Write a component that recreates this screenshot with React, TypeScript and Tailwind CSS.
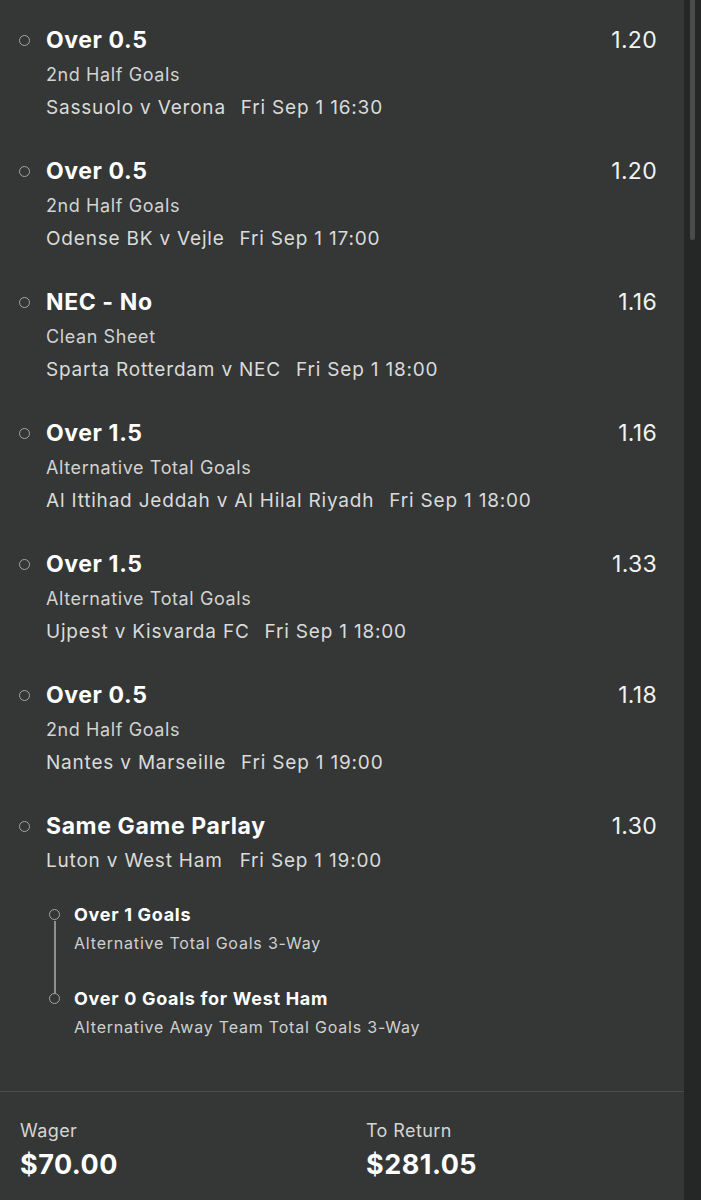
const legs = [
  {
    title: "Over 0.5",
    market: "2nd Half Goals",
    match: "Sassuolo v Verona",
    time: "Fri Sep 1 16:30",
    odds: "1.20",
  },
  {
    title: "Over 0.5",
    market: "2nd Half Goals",
    match: "Odense BK v Vejle",
    time: "Fri Sep 1 17:00",
    odds: "1.20",
  },
  {
    title: "NEC - No",
    market: "Clean Sheet",
    match: "Sparta Rotterdam v NEC",
    time: "Fri Sep 1 18:00",
    odds: "1.16",
  },
  {
    title: "Over 1.5",
    market: "Alternative Total Goals",
    match: "Al Ittihad Jeddah v Al Hilal Riyadh",
    time: "Fri Sep 1 18:00",
    odds: "1.16",
  },
  {
    title: "Over 1.5",
    market: "Alternative Total Goals",
    match: "Ujpest v Kisvarda FC",
    time: "Fri Sep 1 18:00",
    odds: "1.33",
  },
  {
    title: "Over 0.5",
    market: "2nd Half Goals",
    match: "Nantes v Marseille",
    time: "Fri Sep 1 19:00",
    odds: "1.18",
  },
];

const sgpLegs = [
  { title: "Over 1 Goals", market: "Alternative Total Goals 3-Way" },
  { title: "Over 0 Goals for West Ham", market: "Alternative Away Team Total Goals 3-Way" },
];

const Dot = () => (
  <span className="w-[27px] shrink-0 flex items-center h-[30px]">
    <span className="block w-[11px] h-[11px] rounded-full border-[1.5px] border-[#a3a5a4]" />
  </span>
);

const App = () => {
  return (
    <div
      className="flex w-[701px] h-[1200px] bg-[#252726] overflow-hidden"
      style={{ fontFamily: "Inter, 'Noto Sans', sans-serif" }}
    >
      <div className="w-[684px] flex flex-col bg-[#343736]">
        {/* Bet legs */}
        <div className="flex-1 pt-[25px] pl-[19px] pr-[27px]">
          {legs.map((leg, i) => (
            <div key={i} className="flex mb-[32px]">
              <Dot />
              <div className="flex-1">
                <div className="flex justify-between items-center h-[30px]">
                  <span className="text-[23px] font-bold text-white tracking-[0.6px]">{leg.title}</span>
                  <span className="text-[23px] text-[#f2f2f2] tracking-[0.3px]">{leg.odds}</span>
                </div>
                <div className="mt-[3px] text-[18px] text-[#d2d3d2] tracking-[0.6px] leading-[33px]">
                  {leg.market}
                </div>
                <div className="text-[19px] text-[#dadbda] tracking-[0.8px] leading-[33px]">
                  {leg.match}
                  <span className="ml-[15px]">{leg.time}</span>
                </div>
              </div>
            </div>
          ))}

          {/* Same game parlay */}
          <div className="flex">
            <Dot />
            <div className="flex-1">
              <div className="flex justify-between items-center h-[30px]">
                <span className="text-[23px] font-bold text-white tracking-[0.6px]">Same Game Parlay</span>
                <span className="text-[23px] text-[#f2f2f2] tracking-[0.3px]">1.30</span>
              </div>
              <div className="mt-[3px] text-[19px] text-[#dadbda] tracking-[0.8px] leading-[33px]">
                Luton v West Ham
                <span className="ml-[17px]">Fri Sep 1 19:00</span>
              </div>

              <div className="relative mt-[25px] -ml-[46px] pl-[74px]">
                <span className="absolute left-[54px] top-[19px] h-[78px] w-[1.5px] bg-[#8e908f]" />
                {sgpLegs.map((s, i) => (
                  <div key={i} className={`relative ${i > 0 ? "mt-[28px]" : ""}`}>
                    <span className="absolute -left-[25px] top-[7px] w-[11px] h-[11px] rounded-full border-[1.5px] border-[#a3a5a4] bg-[#343736]" />
                    <div className="text-[18px] font-bold text-white tracking-[0.7px] leading-[26px]">{s.title}</div>
                    <div className="text-[16px] text-[#cfd0cf] tracking-[0.8px] leading-[30px]">{s.market}</div>
                  </div>
                ))}
              </div>
            </div>
          </div>
        </div>

        {/* Footer */}
        <div className="h-[109px] border-t border-[#4a4d4c] flex pl-[20px] pt-[26px]">
          <div className="w-[346px]">
            <div className="text-[18px] text-[#d4d5d4] tracking-[0.4px] leading-[26px]">Wager</div>
            <div className="text-[27px] font-bold text-white tracking-[0.5px] leading-[42px]">$70.00</div>
          </div>
          <div>
            <div className="text-[18px] text-[#d4d5d4] tracking-[0.4px] leading-[26px]">To Return</div>
            <div className="text-[27px] font-bold text-white tracking-[0.5px] leading-[42px]">$281.05</div>
          </div>
        </div>
      </div>

      {/* Scrollbar */}
      <div className="flex-1 flex justify-center">
        <div className="w-[5px] h-[240px] rounded-b-full bg-[#4a4b4b]" />
      </div>
    </div>
  );
};

export default App;
